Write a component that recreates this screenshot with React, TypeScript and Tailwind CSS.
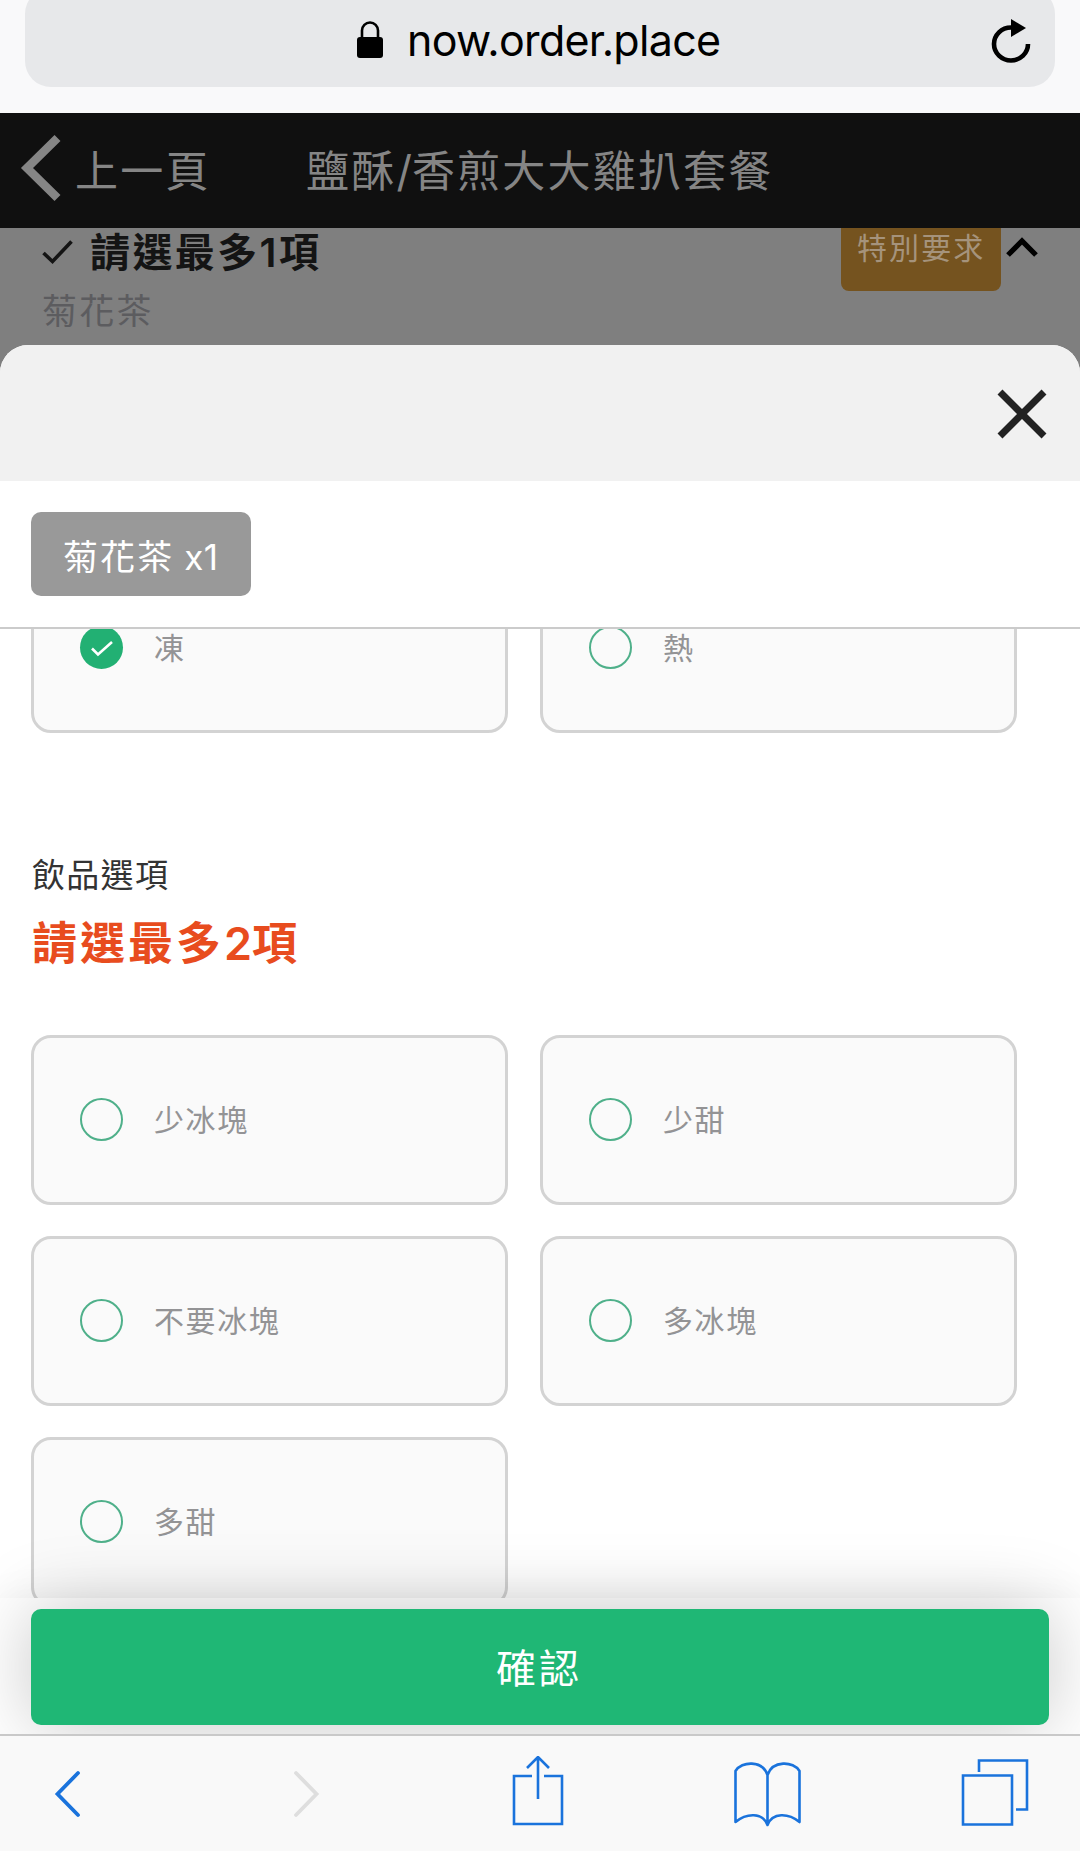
import type { ReactNode } from 'react';

const temperatures = [
  { label: '凍', selected: true },
  { label: '熱', selected: false },
];

const drinkOptions = [
  { label: '少冰塊', selected: false },
  { label: '少甜', selected: false },
  { label: '不要冰塊', selected: false },
  { label: '多冰塊', selected: false },
  { label: '多甜', selected: false },
];

type Option = { label: string; selected: boolean };

function OptionCard({ label, selected }: Option) {
  return (
    <button className="flex h-[170px] items-center rounded-[20px] border-[3px] border-[#d3d3d3] bg-[#fafafa] pb-px pl-[46px] text-left">
      {selected ? (
        <span className="flex h-[43px] w-[43px] items-center justify-center rounded-full bg-[#22b073]">
          <svg className="h-[42px] w-[42px]" viewBox="0 0 42 42" fill="none" stroke="#fff" strokeWidth="2.6">
            <path d="M11 21.5l6 6L31 15" />
          </svg>
        </span>
      ) : (
        <span className="h-[43px] w-[43px] rounded-full border-2 border-[#4fb08a]" />
      )}
      <span className="ml-[31px] text-[30px] leading-10 tracking-[1.6px] text-[#939395]">{label}</span>
    </button>
  );
}

function OptionGrid({ options }: { options: Option[] }) {
  return (
    <div className="grid w-[986px] grid-cols-2 gap-x-8 gap-y-[31px]">
      {options.map((option) => (
        <OptionCard key={option.label} {...option} />
      ))}
    </div>
  );
}

function ToolbarIcon({ children }: { children: ReactNode }) {
  return (
    <svg className="h-[76px] w-[76px]" viewBox="0 0 76 76" fill="none" stroke="#1a73dc" strokeWidth="2.6">
      {children}
    </svg>
  );
}

export default function App() {
  return (
    <div className="flex h-[1851px] w-[1080px] flex-col overflow-hidden bg-[#7f7f7f] font-['Inter','Noto_Sans_CJK_TC',sans-serif]">
      {/* Browser address bar */}
      <div className="h-[113px] shrink-0 bg-[#f9f9fa] px-[25px]">
        <div className="-mt-3 flex h-[99px] items-center rounded-[26px] bg-[#e7e8ea] pt-1">
          <svg className="ml-[331px] h-[38px] w-[28px]" viewBox="0 0 28 38" fill="none">
            <path d="M6 18V9.5a8 8 0 0 1 16 0V18" stroke="#000" strokeWidth="2.6" />
            <rect x="1" y="16" width="26" height="21" rx="3" fill="#000" />
          </svg>
          <span className="ml-[23px] w-[330px] text-[43px] leading-[50px] tracking-[-0.7px] text-black">now.order.place</span>
          <svg className="ml-[253px] mt-1 h-[50px] w-[42px]" viewBox="0 0 42 50" fill="none">
            <path d="M38 27a17 16.5 0 1 1-17-16.5" stroke="#000" strokeWidth="4.6" />
            <path d="M21 2l15 9-15 9z" fill="#000" />
          </svg>
        </div>
      </div>

      {/* Page header, dimmed behind the sheet */}
      <div className="flex h-[115px] shrink-0 items-center bg-[#101010] pb-[3px] text-[43px] leading-[60px] tracking-[2.2px] text-[#858585]">
        <svg className="ml-5 h-[70px] w-[44px]" viewBox="0 0 44 70" fill="none">
          <path d="M37.5 4L7 34l30.5 30" stroke="#858585" strokeWidth="8.5" />
        </svg>
        <span className="ml-[11px] w-[231px] pt-[3px]">上一頁</span>
        <h1 className="pt-[3px]">
          鹽酥<span className="tracking-[0px]">/</span>香煎大大雞扒套餐
        </h1>
      </div>

      <div className="flex h-[117px] shrink-0">
        <div className="pl-[42px]">
          <div className="flex items-center pt-0.5">
            <svg className="h-[26px] w-[32px]" viewBox="0 0 32 26" fill="none" stroke="#141414" strokeWidth="3.6">
              <path d="M1.5 13L10.5 21.5 29.5 1.5" />
            </svg>
            <h2 className="ml-4 text-[40px] font-semibold leading-[46px] tracking-[2.4px] text-[#141414]">請選最多1項</h2>
          </div>
          <p className="mt-[13px] text-[35px] leading-[44px] tracking-[2.3px] text-[#5c5c5f]">菊花茶</p>
        </div>
        <span className="ml-auto h-[63px] w-40 rounded-b-lg bg-[#75531f] pl-4 text-[30px] leading-[40px] tracking-[2.1px] text-[#a5937c]">
          特別要求
        </span>
        <svg className="ml-[5px] mr-[42px] mt-[9px] h-[22px] w-8" viewBox="0 0 32 22" fill="none" stroke="#000" strokeWidth="5.2">
          <path d="M2 18L16 4l14 14" />
        </svg>
      </div>

      {/* Sheet */}
      <div className="z-10 flex min-h-0 flex-1 flex-col overflow-hidden rounded-t-[28px] bg-white">
        <div className="flex h-[136px] shrink-0 items-center justify-end bg-[#f1f1f1] pr-[33px] pt-0.5">
          <svg className="h-[50px] w-[50px]" viewBox="0 0 50 50" fill="none" stroke="#222" strokeWidth="7">
            <path d="M3 3l44 44M47 3L3 47" />
          </svg>
        </div>
        <div className="h-[148px] shrink-0 border-b-2 border-[#cbcbcb] pl-[31px] pt-[31px]">
          <span className="block h-[84px] w-[220px] rounded-[10px] bg-[#999] pl-8 text-[35px] leading-[90px] tracking-[2.1px] text-white">
            菊花茶 <span className="-ml-0.5 tracking-[0.5px]">x1</span>
          </span>
        </div>

        {/* Scrolled options */}
        <div className="h-[969px] shrink-0 overflow-hidden pl-[31px]">
          <div className="-mt-[66px]">
            <OptionGrid options={temperatures} />
          </div>
          <p className="mt-[120px] pl-px text-[33px] leading-[44px] tracking-[1.3px] text-[#333]">飲品選項</p>
          <h2 className="mt-5 pl-px text-[45px] font-semibold leading-[54px] tracking-[3px] text-[#e84c1e]">
            請選最多<span className="tracking-[0px]">2</span>項
          </h2>
          <div className="mt-[64px]">
            <OptionGrid options={drinkOptions} />
          </div>
        </div>

        {/* Confirm bar */}
        <div className="relative h-[136px] shrink-0 bg-white px-[31px] pt-[11px] shadow-[0_0_40px_rgba(0,0,0,0.05)]">
          <button className="relative flex h-[116px] w-full items-center justify-center rounded-[10px] bg-[#1fb775] pt-[3px] pr-0.5 text-[40px] tracking-[3px] text-white shadow-[0_0_75px_rgba(0,0,0,0.22)]">
            確認
          </button>
        </div>

        {/* Browser toolbar */}
        <div className="relative flex flex-1 justify-between border-t-2 border-[#c9c9c9] bg-[#f9f9f9] pl-[31px] pr-[45px] pt-5">
          <ToolbarIcon>
            <path d="M47 17L26.5 38 47 59" strokeWidth="3.8" strokeLinecap="round" />
          </ToolbarIcon>
          <ToolbarIcon>
            <path d="M33 17l20.5 21L33 59" stroke="#dedede" strokeWidth="3.8" strokeLinecap="round" />
          </ToolbarIcon>
          <ToolbarIcon>
            <path d="M37 20H19v48h48V20H49M43 43V1M32 12L43 1l11 11" />
          </ToolbarIcon>
          <ToolbarIcon>
            <path d="M40.5 69V19C35.5 4 14.5 5 8.5 15v51c11-9 27-10 32 3 5-13 21-12 32-3V15C66.500 5 45.500 4 40.500 19" strokeLinejoin="round" />
          </ToolbarIcon>
          <ToolbarIcon>
            <path d="M4 19.500h49v49H4zM20 16V4.500h48v49H57" />
          </ToolbarIcon>
        </div>
      </div>
    </div>
  );
}
